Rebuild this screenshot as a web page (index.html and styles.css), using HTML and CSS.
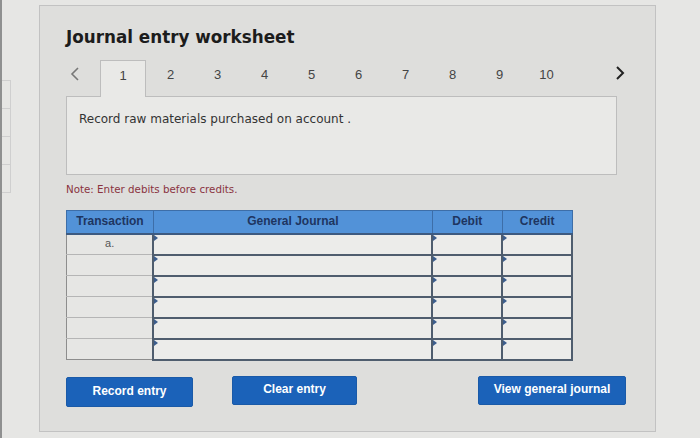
FILE: index.html
```html
<!DOCTYPE html>
<html>
<head>
<meta charset="utf-8">
<link rel="stylesheet" href="styles.css">
</head>
<body>
<div class="screen">
  <div class="side">
    <div class="side-box">
      <div class="side-cell"></div>
      <div class="side-cell"></div>
      <div class="side-cell"></div>
      <div class="side-cell last"></div>
    </div>
  </div>
  <div class="panel">
    <h1 class="title">Journal entry worksheet</h1>
    <div class="tabs">
      <span class="arrow prev">
        <svg width="10" height="14" viewBox="0 0 10 14"><path d="M8 1 L2 7 L8 13" fill="none" stroke="#777" stroke-width="1.6"/></svg>
      </span>
      <span class="tab active">1</span>
      <span class="tab">2</span>
      <span class="tab">3</span>
      <span class="tab">4</span>
      <span class="tab">5</span>
      <span class="tab">6</span>
      <span class="tab">7</span>
      <span class="tab">8</span>
      <span class="tab">9</span>
      <span class="tab">10</span>
      <span class="arrow next">
        <svg width="10" height="14" viewBox="0 0 10 14"><path d="M2 1 L8 7 L2 13" fill="none" stroke="#222" stroke-width="2"/></svg>
      </span>
    </div>
    <div class="question">Record raw materials purchased on account .</div>
    <p class="note">Note: Enter debits before credits.</p>
    <table class="journal">
      <thead>
        <tr>
          <th class="c-tr">Transaction</th>
          <th class="c-gj">General Journal</th>
          <th class="c-dr">Debit</th>
          <th class="c-cr">Credit</th>
        </tr>
      </thead>
      <tbody>
        <tr><td class="tr">a.</td><td class="in"></td><td class="in"></td><td class="in"></td></tr>
        <tr><td class="tr"></td><td class="in"></td><td class="in"></td><td class="in"></td></tr>
        <tr><td class="tr"></td><td class="in"></td><td class="in"></td><td class="in"></td></tr>
        <tr><td class="tr"></td><td class="in"></td><td class="in"></td><td class="in"></td></tr>
        <tr><td class="tr"></td><td class="in"></td><td class="in"></td><td class="in"></td></tr>
        <tr><td class="tr"></td><td class="in"></td><td class="in"></td><td class="in"></td></tr>
      </tbody>
    </table>
    <div class="buttons">
      <button class="btn btn-record">Record entry</button>
      <button class="btn btn-clear">Clear entry</button>
      <button class="btn btn-view">View general journal</button>
    </div>
  </div>
</div>
</body>
</html>
```
FILE: styles.css
```css
html, body {
  margin: 0;
  padding: 0;
}
body {
  background: #e6e6e4;
  font-family: "DejaVu Sans", Verdana, sans-serif;
  width: 700px;
  height: 438px;
  overflow: hidden;
}
.screen {
  display: flex;
  height: 438px;
  border-left: 2px solid #8f9090;
  box-sizing: border-box;
}
.side {
  width: 37px;
  padding-top: 80px;
}
.side-box {
  width: 8px;
  border: 1px solid #cfcfcf;
  border-left: none;
}
.side-cell {
  height: 27px;
  border-bottom: 1px solid #cfcfcf;
}
.side-cell.last {
  border-bottom: none;
}
.panel {
  margin-top: 5px;
  width: 617px;
  height: 427px;
  border: 1px solid #c2c2c2;
  background: #dededc;
  padding: 0 0 0 26px;
  box-sizing: border-box;
}
.title {
  margin: 20px 0 0 0;
  font-size: 16.8px;
  line-height: 22px;
  font-weight: bold;
  color: #1c1c1c;
}
.tabs {
  display: flex;
  align-items: stretch;
  height: 36px;
  margin-top: 12px;
  width: 559px;
  position: relative;
  z-index: 1;
}
.arrow {
  display: flex;
  align-items: center;
}
.arrow.prev {
  width: 34px;
  padding-left: 4px;
  padding-bottom: 8px;
  box-sizing: border-box;
}
.arrow.next {
  margin-left: auto;
  margin-bottom: 11px;
}
.tab {
  width: 47px;
  display: flex;
  align-items: center;
  justify-content: center;
  font-family: "Liberation Sans", Arial, sans-serif;
  font-size: 13px;
  color: #444;
  padding-bottom: 7px;
  box-sizing: border-box;
}
.tab.active {
  width: 46px;
  margin-right: 1px;
  background: #e9e9e7;
  border: 1px solid #bdbdbd;
  border-bottom: none;
  margin-bottom: -1px;
  height: 37px;
  padding-bottom: 8px;
}
.question {
  width: 551px;
  height: 79px;
  box-sizing: border-box;
  border: 1px solid #bdbdbd;
  background: #e9e9e7;
  padding: 14px 0 0 12px;
  font-size: 12px;
  line-height: 16px;
  color: #333;
}
.note {
  margin: 8px 0 0 0;
  font-size: 10.3px;
  line-height: 12px;
  color: #8a3340;
}
.journal {
  margin-top: 15px;
  border-collapse: collapse;
  width: 507px;
  font-family: "Liberation Sans", Arial, sans-serif;
}
.journal th {
  background: #5292d8;
  color: #1e3560;
  font-size: 12px;
  font-weight: bold;
  height: 23px;
  padding: 0 0 2px 0;
  border: 1px solid #3d6ea8;
  border-bottom: 2px solid #3d5a80;
  box-sizing: border-box;
}
.c-tr { width: 87px; }
.c-gj { width: 280px; }
.c-dr { width: 70px; }
.c-cr { width: 70px; }
.journal td {
  height: 21px;
  padding: 0;
  box-sizing: border-box;
}
.journal td.tr {
  background: #e6e6e4;
  border: 1px solid #b5b5b5;
  border-left: 1px solid #8d8d8d;
  text-align: center;
  font-size: 11px;
  color: #555;
  padding-bottom: 3px;
}
.journal td.in {
  background: #ececea;
  border: 2px solid #4f5d6e;
  position: relative;
}
.journal td.in::before {
  content: "";
  position: absolute;
  left: 0;
  top: 0;
  border-top: 3px solid transparent;
  border-bottom: 3px solid transparent;
  border-left: 4px solid #3c5d8c;
}
.journal tbody tr:last-child td.tr {
  border-bottom: 1px solid #8d8d8d;
}
.buttons {
  display: flex;
  align-items: flex-start;
  margin-top: 15px;
}
.btn {
  font-family: "Liberation Sans", Arial, sans-serif;
  font-weight: bold;
  font-size: 12px;
  color: #fff;
  background: #1b62b9;
  border: 1px solid #1a5aa8;
  border-radius: 2px;
  height: 30px;
  padding: 0 0 2px 0;
  cursor: pointer;
}
.btn-record {
  width: 127px;
  margin-top: 1px;
}
.btn-clear {
  width: 125px;
  margin-left: 39px;
  height: 29px;
}
.btn-view {
  width: 148px;
  margin-left: 121px;
  height: 29px;
}
```
